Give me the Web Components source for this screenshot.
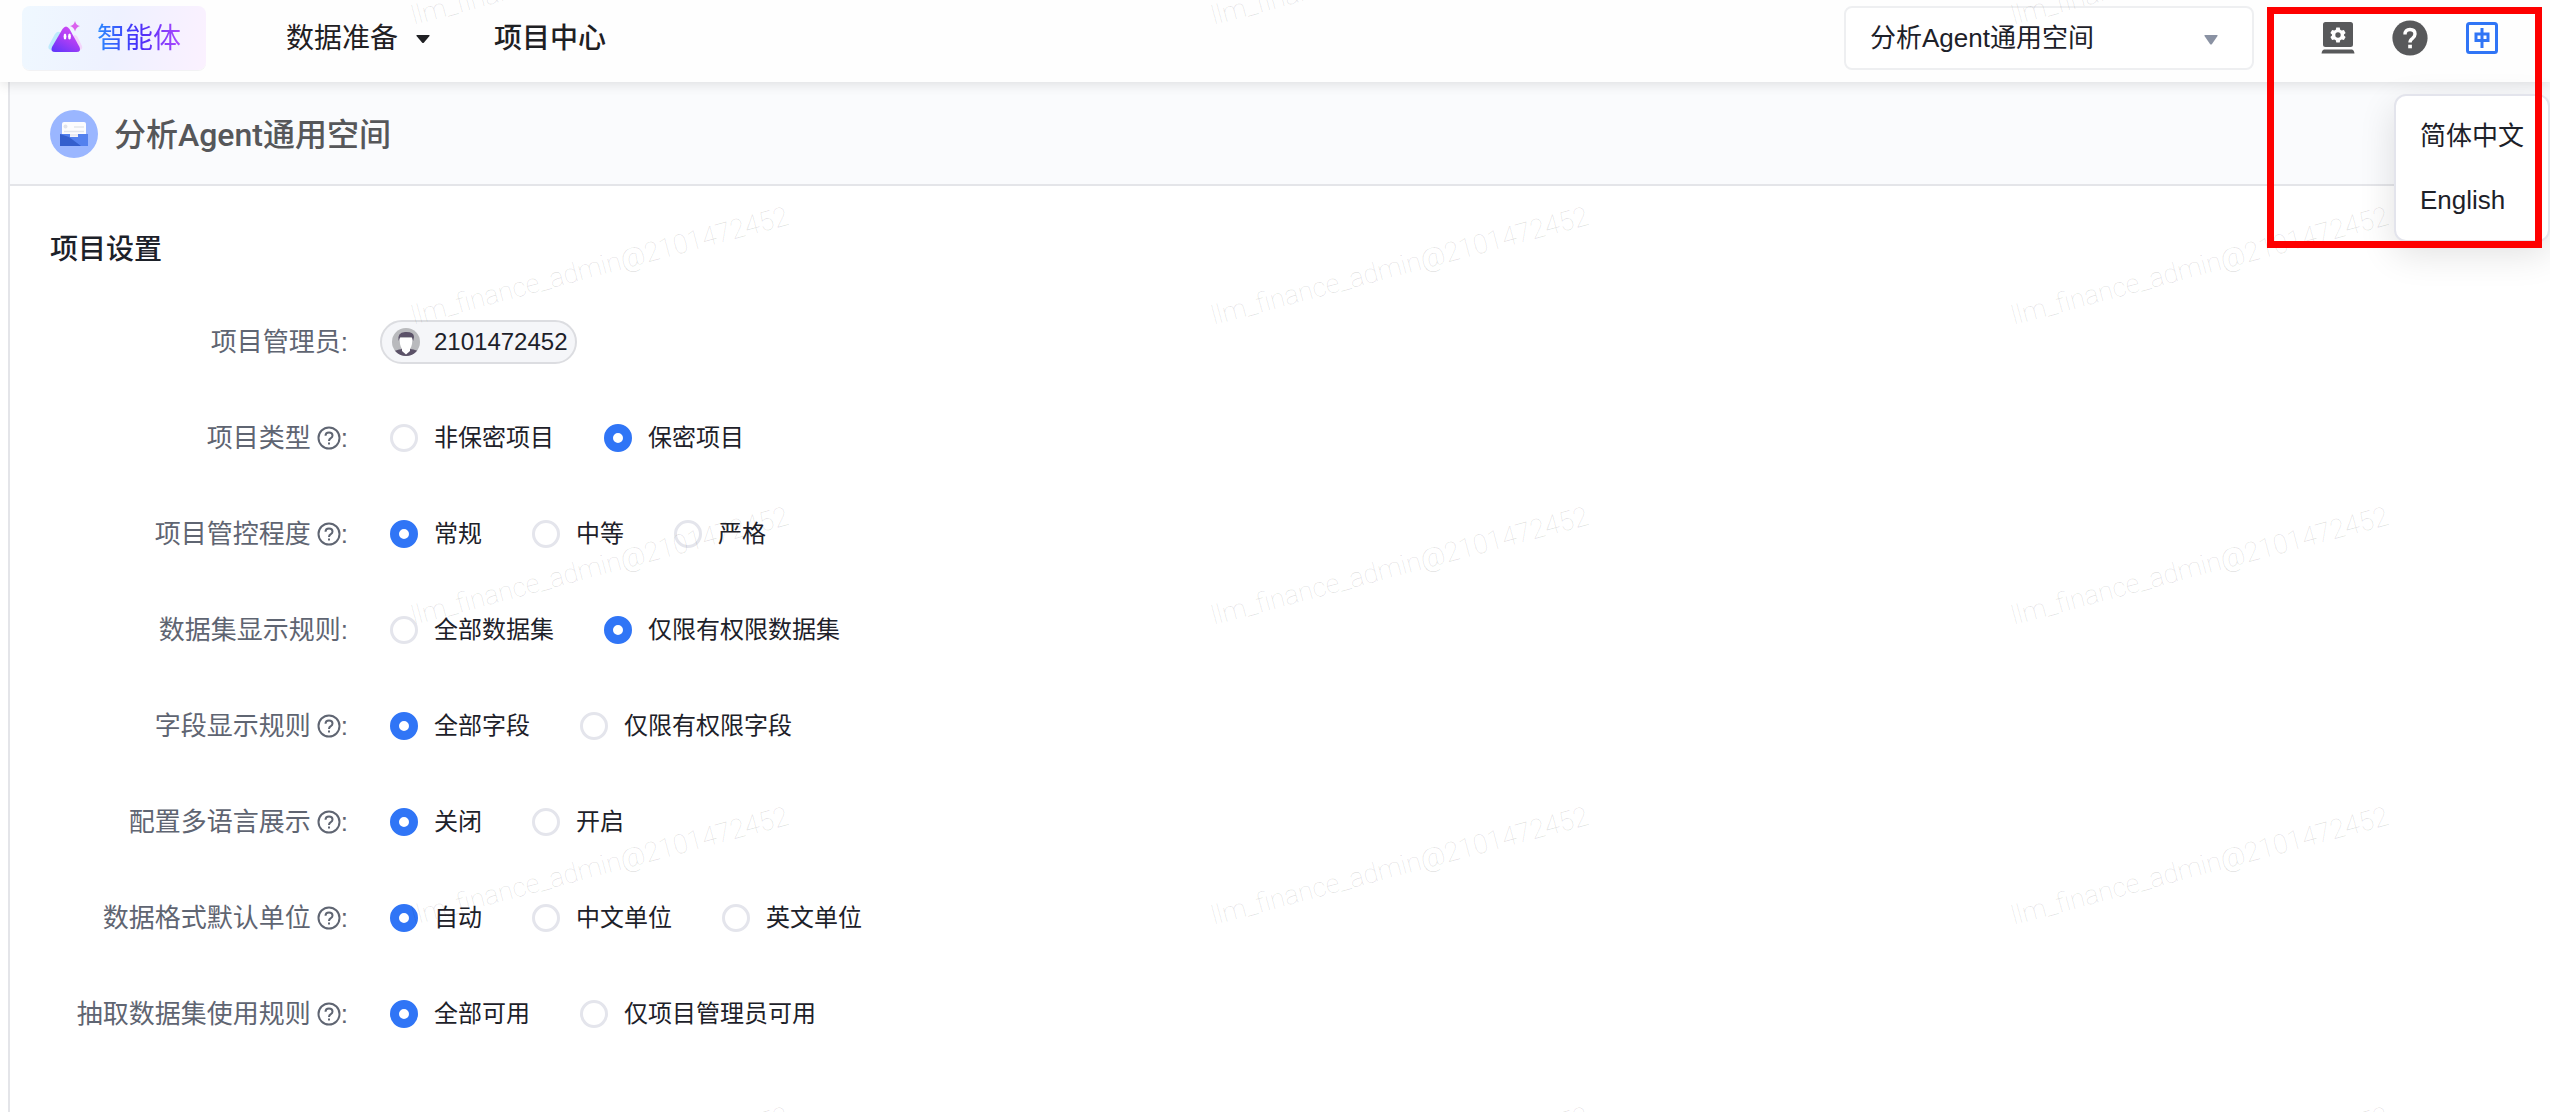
<!DOCTYPE html>
<html lang="zh-CN">
<head>
<meta charset="utf-8">
<meta name="viewport" content="width=device-width, initial-scale=1">
<title>项目设置</title>
<style>
    body {
        margin: 0;
        position: relative;
        min-height: 100vh;
        background: #fff;
        color: #1d2129;
        font-family: "Liberation Sans", "Noto Sans CJK SC", sans-serif;
        font-size: 26px;
        line-height: 40px;
        --primary: #3075f6;
        --line: #e4e5e9;
        --muted: #5f6572;
        --icon: #58595b;
    }
</style>
</head>
<body>
    <app-header>
        <agent-tab slot="brand">智能体</agent-tab>
        <nav-item slot="nav" menu>数据准备</nav-item>
        <nav-item slot="nav" strong>项目中心</nav-item>
        <space-select slot="tools" value="分析Agent通用空间"></space-select>
        <tool-icons slot="tools"></tool-icons>
    </app-header>

    <project-page>
        <space-title slot="title">分析Agent通用空间</space-title>
        <span slot="heading">项目设置</span>

        <form-row label="项目管理员">
            <user-chip>2101472452</user-chip>
        </form-row>
        <form-row label="项目类型" help>
            <radio-group label="项目类型" options="非保密项目,保密项目" value="保密项目"></radio-group>
        </form-row>
        <form-row label="项目管控程度" help>
            <radio-group label="项目管控程度" options="常规,中等,严格" value="常规"></radio-group>
        </form-row>
        <form-row label="数据集显示规则">
            <radio-group label="数据集显示规则" options="全部数据集,仅限有权限数据集" value="仅限有权限数据集"></radio-group>
        </form-row>
        <form-row label="字段显示规则" help>
            <radio-group label="字段显示规则" options="全部字段,仅限有权限字段" value="全部字段"></radio-group>
        </form-row>
        <form-row label="配置多语言展示" help>
            <radio-group label="配置多语言展示" options="关闭,开启" value="关闭"></radio-group>
        </form-row>
        <form-row label="数据格式默认单位" help>
            <radio-group label="数据格式默认单位" options="自动,中文单位,英文单位" value="自动"></radio-group>
        </form-row>
        <form-row label="抽取数据集使用规则" help>
            <radio-group label="抽取数据集使用规则" options="全部可用,仅项目管理员可用" value="全部可用"></radio-group>
        </form-row>
    </project-page>

    <water-mark text="llm_finance_admin@2101472452"></water-mark>
    <focus-frame></focus-frame>

<script>
const reset = `
    * {
        box-sizing: border-box;
    }

    button, select, input {
        margin: 0;
        padding: 0;
        border: 0;
        background: none;
        font: inherit;
        color: inherit;
        cursor: pointer;
    }

    svg {
        display: block;
        flex: none;
    }
`;

class BaseElement extends HTMLElement {
    constructor() {
        super();
        this.shadowDOM = this.attachShadow({ mode: "open" });
    }

    connectedCallback() {
        this.shadowDOM.innerHTML = `<style>${reset}${this.styles()}</style>${this.markup()}`;
    }
}

class AppHeader extends BaseElement {
    styles() {
        return `
        :host {
            display: block;
            position: relative;
            z-index: 2;
        }

        header {
            display: flex;
            align-items: center;
            padding: 6px 50px 12px 22px;
            background: #fefefe;
            box-shadow: 0 2px 12px rgba(0, 0, 0, 0.12);
        }

        nav {
            display: flex;
            gap: 64px;
            margin-left: 80px;
        }

        .tools {
            display: flex;
            align-items: center;
            gap: 66px;
            margin-left: auto;
        }`;
    }

    markup() {
        return `
        <header>
            <slot name="brand"></slot>
            <nav><slot name="nav"></slot></nav>
            <div class="tools"><slot name="tools"></slot></div>
        </header>`;
    }
}

class AgentTab extends BaseElement {
    styles() {
        return `
        :host {
            display: block;
        }

        a {
            display: flex;
            align-items: center;
            gap: 14px;
            height: 64px;
            padding: 0 25px;
            border-radius: 8px;
            background: linear-gradient(100deg, #eff8ff, #eef1ff 50%, #fbf1ff);
            box-shadow: 0 1px 0 #f2f2f4;
            font-size: 28px;
            text-decoration: none;
        }

        span {
            padding-top: 2px;
            background: linear-gradient(90deg, #2a8cff, #4433fa 45%, #5a2ff8 60%, #b04aff);
            -webkit-background-clip: text;
            background-clip: text;
            color: transparent;
        }`;
    }

    markup() {
        return `
        <a href="#agent">
            <svg width="36" height="36" viewBox="0 0 36 36" aria-hidden="true">
                <defs>
                    <linearGradient id="body" x1="0.8" y1="0" x2="0.2" y2="1">
                        <stop offset="0" stop-color="#d24cf5"/>
                        <stop offset="0.5" stop-color="#a93df5"/>
                        <stop offset="1" stop-color="#6537fb"/>
                    </linearGradient>
                </defs>
                <path d="M10 12q3-1 4 2l6 16H4q-4-1-2-5l6-11z" fill="#bdeafc"/>
                <path d="M27 15q3 0 4 3l4 8q1 3-2 4h-9z" fill="#f3d5fb"/>
                <path d="M15.500 9q3.500-5 7 0l10 18q2 5-3 5H8q-5 0-3-5z" fill="url(#body)"/>
                <ellipse cx="18" cy="16.500" rx="1.400" ry="3" fill="#fff"/>
                <ellipse cx="22.500" cy="16.500" rx="1.400" ry="3" fill="#fff"/>
                <path d="M28 1q1 4.500 5 5-4 1-5 5.500-1-4.500-5-5.500 4-.5 5-5z" fill="#db62ee"/>
            </svg>
            <span><slot></slot></span>
        </a>`;
    }
}

class NavItem extends BaseElement {
    styles() {
        return `
        :host {
            display: block;
            padding-top: 2px;
            font-size: 28px;
            color: #1f2023;
        }

        :host([strong]) {
            font-weight: 500;
        }

        button {
            display: flex;
            align-items: center;
            gap: 18px;
        }

        a {
            color: inherit;
            text-decoration: none;
        }`;
    }

    markup() {
        if (!this.hasAttribute("menu")) {
            return `<a href="#projects"><slot></slot></a>`;
        }
        return `
        <button type="button" aria-haspopup="true">
            <slot></slot>
            <svg width="14" height="8" viewBox="0 0 14 8"><path d="M1 0h12q1 0 .5 1L8 7.500q-1 1-2 0L.5 1Q0 0 1 0z" fill="#1f2023"/></svg>
        </button>`;
    }
}

class SpaceSelect extends BaseElement {
    styles() {
        return `
        :host {
            display: grid;
            align-items: center;
            width: 410px;
        }

        select, svg {
            grid-area: 1 / 1;
        }

        select {
            appearance: none;
            width: 100%;
            height: 64px;
            padding: 0 60px 0 24px;
            border: 2px solid #eeeff1;
            border-radius: 8px;
            background: #fff;
        }

        svg {
            justify-self: end;
            margin-right: 36px;
            margin-top: 4px;
            pointer-events: none;
        }`;
    }

    markup() {
        const value = this.getAttribute("value");
        return `
        <select aria-label="空间"><option>${value}</option></select>
        <svg width="14" height="10" viewBox="0 0 14 10"><path d="M1 0h12q1 0 .5 1L8 9q-1 1-2 0L.5 1Q0 0 1 0z" fill="#8a92a3"/></svg>`;
    }
}

class ToolIcons extends BaseElement {
    styles() {
        return `
        :host {
            display: flex;
            gap: 36px;
            color: var(--icon);
        }

        .lang {
            position: relative;
        }

        .lang > button {
            display: block;
            color: var(--primary);
        }

        .menu {
            position: absolute;
            top: 74px;
            right: -50px;
            padding: 8px 0;
            border: 2px solid #e3e4ec;
            border-radius: 12px;
            background: #fff;
            box-shadow: 0 12px 36px rgba(0, 0, 0, 0.12);
            color: #1d2129;
        }

        .menu button {
            display: block;
            width: 100%;
            padding: 12px 24px;
            text-align: left;
            white-space: nowrap;
        }`;
    }

    markup() {
        return `
        <button type="button" aria-label="管理">
            <svg width="36" height="36" viewBox="0 0 36 36" fill="currentColor">
                <path fill-rule="evenodd" d="M5.500 2h25q2.500 0 2.500 2.500v20q0 2.500-2.500 2.500h-25Q3 27 3 24.500v-20Q3 2 5.500 2zM16.300 7.500l-.5 2.200-1.500.9-2.200-.7-1.700 3 1.600 1.500v1.200l-1.600 1.500 1.700 3 2.200-.7 1.500.9.500 2.200h3.400l.5-2.200 1.500-.9 2.200.7 1.700-3-1.600-1.500v-1.200l1.600-1.500-1.700-3-2.200.7-1.500-.9-.5-2.200z"/>
                <circle cx="18" cy="15" r="2.700"/>
                <path d="M4 29.500h28q2 .5 2.500 4h-33q.5-3.500 2.500-4z"/>
            </svg>
        </button>
        <button type="button" aria-label="帮助">
            <svg width="36" height="36" viewBox="0 0 36 36">
                <circle cx="18" cy="18" r="17.600" fill="currentColor"/>
                <path d="M13 14.500q0-5 5-5t5 4.500q0 2.500-2.500 4.300-2.500 1.700-2.500 4.200" fill="none" stroke="#fff" stroke-width="3.400"/>
                <path d="M16.200 24.700h3.700v3.600h-3.700z" fill="#fff"/>
            </svg>
        </button>
        <div class="lang">
            <button type="button" aria-label="语言" aria-expanded="true">
                <svg width="36" height="36" viewBox="0 0 36 36" fill="none" stroke="currentColor" stroke-width="3">
                    <rect x="3.500" y="3.500" width="29" height="29" rx="2"/>
                    <path d="M12 14h12v6.500H12zM18 8v20"/>
                </svg>
            </button>
            <div class="menu">
                <button type="button">简体中文</button>
                <button type="button">English</button>
            </div>
        </div>`;
    }
}

class ProjectPage extends BaseElement {
    styles() {
        return `
        :host {
            display: block;
            margin-left: 8px;
            border-left: 2px solid var(--line);
            min-height: calc(100vh - 82px);
            box-sizing: border-box;
        }

        h2 {
            margin: 0;
            padding: 44px 40px 50px;
            font-size: 28px;
            font-weight: 500;
        }`;
    }

    markup() {
        return `
        <slot name="title"></slot>
        <h2><slot name="heading"></slot></h2>
        <form><slot></slot></form>`;
    }
}

class SpaceTitle extends BaseElement {
    styles() {
        return `
        :host {
            display: flex;
            align-items: center;
            gap: 16px;
            padding: 28px 40px 26px;
            border-bottom: 2px solid var(--line);
            background: #fafbfd;
        }

        h1 {
            margin: 0;
            padding-top: 2px;
            color: #56575a;
            font-family: Roboto, "Noto Sans CJK SC", sans-serif;
            font-size: 32px;
            font-weight: 500;
        }`;
    }

    markup() {
        return `
        <svg width="48" height="48" viewBox="0 0 48 48" aria-hidden="true">
            <circle cx="24" cy="24" r="24" fill="#9ab6ff"/>
            <rect x="12" y="12" width="24" height="16" rx="2" fill="#fcfcfe"/>
            <circle cx="15.500" cy="16.500" r="2" fill="#e1e3ea"/>
            <path d="M24 17h10M14 21.500h20" stroke="#e4e6ec" stroke-width="1.500"/>
            <path d="M10 24h10v3h8v-3h10v12H10z" fill="#5481ee"/>
            <path d="M10 24l9 3 12 9H10z" fill="#345fcd"/>
            <path d="M20 24h8v2.500h-8z" fill="#e9eaf2"/>
        </svg>
        <h1><slot></slot></h1>`;
    }
}

class FormRow extends BaseElement {
    styles() {
        return `
        :host {
            display: flex;
            align-items: center;
            gap: 32px;
            height: 44px;
            margin-bottom: 52px;
        }

        .label {
            display: flex;
            flex: none;
            align-items: center;
            justify-content: flex-end;
            width: 338px;
            color: var(--muted);
            white-space: nowrap;
        }

        svg {
            margin-left: 6px;
        }`;
    }

    markup() {
        const help = `
            <svg width="24" height="24" viewBox="0 0 24 24" fill="none" stroke="currentColor" stroke-width="2">
                <circle cx="12" cy="12" r="10.500"/>
                <path d="M8.500 9.800Q8.500 6.500 12 6.500t3.500 3q0 1.600-1.700 2.700Q12 13.300 12 15M12 16.500v2"/>
            </svg>`;
        return `
        <div class="label">${this.getAttribute("label")}${this.hasAttribute("help") ? help : ""}<span>:</span></div>
        <slot></slot>`;
    }
}

class RadioGroup extends BaseElement {
    styles() {
        return `
        :host {
            display: block;
            padding-left: 10px;
            font-size: 24px;
        }

        .group {
            display: flex;
            flex-wrap: wrap;
            gap: 50px;
        }

        label {
            display: flex;
            align-items: center;
            gap: 16px;
            cursor: pointer;
        }

        input {
            appearance: none;
            width: 28px;
            height: 28px;
            border: 3px solid #e4e5ec;
            border-radius: 50%;
            background: #fff;
        }

        input:checked {
            border: 9px solid var(--primary);
        }`;
    }

    markup() {
        const value = this.getAttribute("value");
        const options = this.getAttribute("options").split(",");
        return `
        <div class="group" role="radiogroup" aria-label="${this.getAttribute("label")}">
            ${options.map((option) => `<label><input type="radio" name="option" ${option === value ? "checked" : ""}>${option}</label>`).join("")}
        </div>`;
    }
}

class UserChip extends BaseElement {
    styles() {
        return `
        :host {
            display: flex;
            align-items: center;
            gap: 14px;
            height: 44px;
            padding: 0 8px 0 10px;
            border: 2px solid #dcdde1;
            border-radius: 22px;
            background: #f5f6f9;
            font-size: 24px;
            box-sizing: border-box;
        }`;
    }

    markup() {
        return `
        <svg width="28" height="28" viewBox="0 0 28 28" aria-hidden="true">
            <clipPath id="round"><circle cx="14" cy="14" r="14"/></clipPath>
            <g clip-path="url(#round)">
                <path d="M0 0h28v28H0z" fill="#b9babd"/>
                <path d="M2 23q6-2 8-2h8q3 0 8 2v5H2z" fill="#5b5268"/>
                <path d="M10 19h8v4l-4 3.500L10 23z" fill="#fff"/>
                <path d="M7.500 10h13l-.5 6q-1 6-6 6.500-5-.5-6-6.500z" fill="#fff"/>
                <path d="M6.500 13Q5 4.500 13 4q9-.5 9 5l-.8 4-1.500-4H8.300z" fill="#5b5268"/>
            </g>
        </svg>
        <slot></slot>`;
    }
}

class WaterMark extends BaseElement {
    styles() {
        return `
        :host {
            position: absolute;
            inset: 0;
            z-index: 3;
            overflow: hidden;
            pointer-events: none;
            color: rgba(0, 0, 0, 0.12);
            font-family: Roboto, "Liberation Sans", sans-serif;
            font-size: 27px;
            font-weight: 100;
        }

        /* the pattern repeats every 800 x 300 */
        .tiles {
            display: grid;
            grid-template-columns: repeat(auto-fill, 800px);
            grid-auto-rows: 300px;
            margin: -184px -100px 0 200px;
        }

        span {
            place-self: center;
            white-space: nowrap;
            transform: rotate(-15deg);
        }`;
    }

    markup() {
        const text = this.getAttribute("text");
        return `<div class="tiles" aria-hidden="true">${`<span>${text}</span>`.repeat(15)}</div>`;
    }
}

class FocusFrame extends BaseElement {
    styles() {
        return `
        :host {
            position: absolute;
            z-index: 4;
            top: 7px;
            right: 8px;
            width: 275px;
            height: 241px;
            border: 7px solid #fe0000;
            box-sizing: border-box;
            pointer-events: none;
        }`;
    }

    markup() {
        return "";
    }
}

customElements.define("app-header", AppHeader);
customElements.define("agent-tab", AgentTab);
customElements.define("nav-item", NavItem);
customElements.define("space-select", SpaceSelect);
customElements.define("tool-icons", ToolIcons);
customElements.define("project-page", ProjectPage);
customElements.define("space-title", SpaceTitle);
customElements.define("form-row", FormRow);
customElements.define("radio-group", RadioGroup);
customElements.define("user-chip", UserChip);
customElements.define("water-mark", WaterMark);
customElements.define("focus-frame", FocusFrame);
</script>
</body>
</html>
